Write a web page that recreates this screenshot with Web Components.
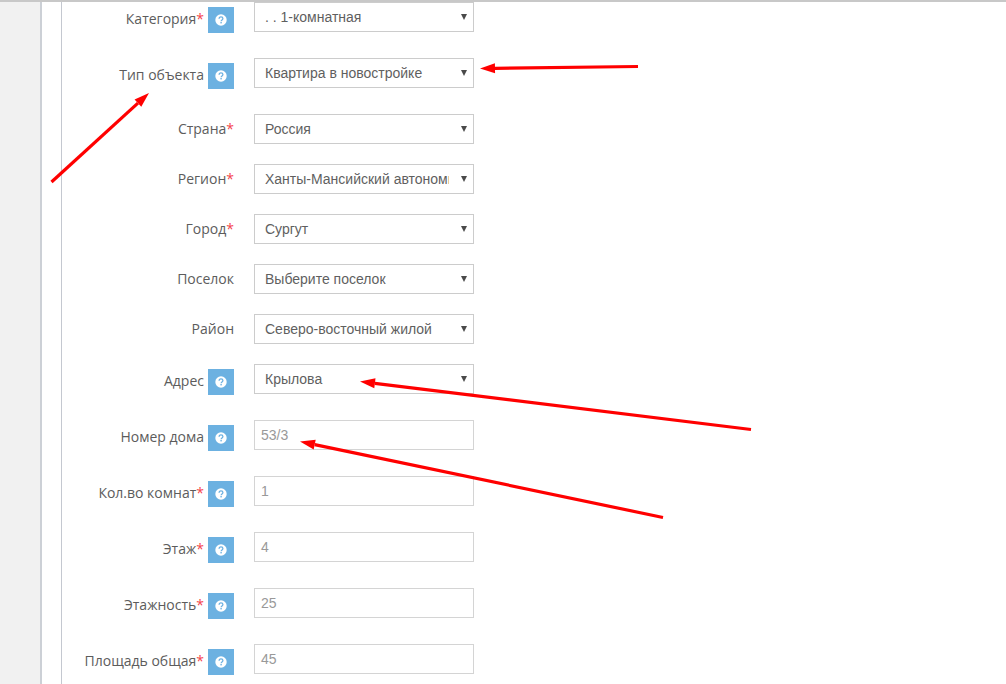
<!DOCTYPE html>
<html lang="ru">
<head>
<meta charset="utf-8">
<title>Форма объекта</title>
<style>
  html, body { margin: 0; padding: 0; background: #fff; overflow: hidden; }
</style>
</head>
<body>
<object-page>
  <form-row label="Категория" required help><select-box value=". . 1-комнатная"></select-box></form-row>
  <form-row label="Тип объекта" help><select-box value="Квартира в новостройке"></select-box></form-row>
  <form-row label="Страна" required><select-box value="Россия"></select-box></form-row>
  <form-row label="Регион" required><select-box value="Ханты-Мансийский автономный округ"></select-box></form-row>
  <form-row label="Город" required><select-box value="Сургут"></select-box></form-row>
  <form-row label="Поселок"><select-box value="Выберите поселок"></select-box></form-row>
  <form-row label="Район"><select-box value="Северо-восточный жилой"></select-box></form-row>
  <form-row label="Адрес" help><select-box value="Крылова"></select-box></form-row>
  <form-row label="Номер дома" help><text-box value="53/3"></text-box></form-row>
  <form-row label="Кол.во комнат" required help><text-box value="1"></text-box></form-row>
  <form-row label="Этаж" required help><text-box value="4"></text-box></form-row>
  <form-row label="Этажность" required help><text-box value="25"></text-box></form-row>
  <form-row label="Площадь общая" required help><text-box value="45"></text-box></form-row>
</object-page>
<red-arrows></red-arrows>

<script>
// page frame: grey side strip, two vertical rules, grey line on top
class ObjectPage extends HTMLElement {
  constructor() {
    super();
    this.attachShadow({ mode: 'open' });
    this.shadowRoot.innerHTML = `
      <style>
        :host {
          display: flex;
          height: 684px;
          overflow: hidden;
          box-sizing: border-box;
          border-top: 2px solid #c8c8c8;
        }
        .strip {
          width: 40px;
          flex: none;
          background: #f1f1f1;
          border-right: 2px solid #ccd0d6;
        }
        .gutter {
          width: 19px;
          flex: none;
          border-right: 1px solid #c4c8d0;
        }
        .form { flex: 1; min-width: 0; }
      </style>
      <div class="strip"></div>
      <div class="gutter"></div>
      <div class="form"><slot></slot></div>
    `;
  }
}

// one form line: label, optional star, optional help button, control in slot
class FormRow extends HTMLElement {
  constructor() {
    super();
    this.attachShadow({ mode: 'open' });
  }

  connectedCallback() {
    const hasHelp = this.hasAttribute('help');
    const required = this.hasAttribute('required');
    this.shadowRoot.innerHTML = `
      <style>
        :host {
          display: flex;
          align-items: flex-start;
          height: ${hasHelp ? 56 : 50}px;
          font-family: "Open Sans", sans-serif;
          font-size: 14px;
          color: #5c5c5c;
        }
        .side {
          width: 172px;
          flex: none;
          display: flex;
          justify-content: flex-end;
          align-items: flex-start;
          gap: 4px;
        }
        .label {
          line-height: 20px;
          padding-top: ${hasHelp ? 7 : 5}px;
          white-space: nowrap;
        }
        .star { color: #f4444c; }
        .help {
          width: 26px;
          height: 26px;
          margin-top: 5px;
          padding-right: 1px;
          box-sizing: border-box;
          background: #6cb1e1;
          display: flex;
          align-items: center;
          justify-content: center;
        }
        .help svg { display: block; }
        .control { margin-left: 20px; width: 220px; flex: none; }
      </style>
      <div class="side">
        <div class="label">${this.getAttribute('label')}${required ? '<span class="star">*</span>' : ''}</div>
        ${hasHelp ? `
          <div class="help">
            <svg width="12" height="12" viewBox="0 0 12 12">
              <circle cx="6" cy="6" r="5.7" fill="#fff"/>
              <path d="M4.1 4.8c0-1.2.8-1.9 1.9-1.9s1.9.6 1.9 1.6c0 1.4-1.8 1.4-1.8 2.7" fill="none" stroke="#6cb1e1" stroke-width="1.3"/>
              <rect x="5.4" y="8" width="1.4" height="1.4" fill="#6cb1e1"/>
            </svg>
          </div>
        ` : ''}
      </div>
      <div class="control"><slot></slot></div>
    `;
  }
}

class SelectBox extends HTMLElement {
  constructor() {
    super();
    this.attachShadow({ mode: 'open' });
  }

  connectedCallback() {
    this.shadowRoot.innerHTML = `
      <style>
        :host {
          display: block;
          height: 30px;
          box-sizing: border-box;
          border: 1px solid #ccc;
          font-family: "Liberation Sans", Arial, sans-serif;
          font-size: 14px;
          color: #5f5f5f;
          position: relative;
          background: #fff;
        }
        .value {
          position: absolute;
          left: 10px;
          right: 24px;
          top: 0;
          line-height: 29px;
          white-space: nowrap;
          overflow: hidden;
        }
        .caret {
          position: absolute;
          right: 6px;
          top: 11px;
          width: 0;
          height: 0;
          border-left: 3.5px solid transparent;
          border-right: 3.5px solid transparent;
          border-top: 6px solid #4a4a4a;
        }
      </style>
      <div class="value">${this.getAttribute('value')}</div>
      <div class="caret"></div>
    `;
  }
}

class TextBox extends HTMLElement {
  constructor() {
    super();
    this.attachShadow({ mode: 'open' });
  }

  connectedCallback() {
    this.shadowRoot.innerHTML = `
      <style>
        :host {
          display: block;
          height: 30px;
          box-sizing: border-box;
          border: 1px solid #d4d4d4;
          padding-left: 6px;
          font-family: "Liberation Sans", Arial, sans-serif;
          font-size: 14px;
          line-height: 28px;
          color: #999;
          background: #fff;
        }
      </style>
      ${this.getAttribute('value')}
    `;
  }
}

// red hand-drawn annotations lying over the form
class RedArrows extends HTMLElement {
  constructor() {
    super();
    this.attachShadow({ mode: 'open' });
    const arrows = [
      [638, 66.5, 480, 68.5],
      [51.5, 182, 149, 93],
      [751, 429.5, 360, 381.5],
      [663, 517.5, 300, 441.5]
    ];
    const heads = arrows.map(([x1, y1, x2, y2]) => {
      const a = Math.atan2(y2 - y1, x2 - x1);
      const bx = x2 - Math.cos(a) * 15, by = y2 - Math.sin(a) * 15;
      const nx = -Math.sin(a) * 5, ny = Math.cos(a) * 5;
      return `
        <line x1="${x1}" y1="${y1}" x2="${bx}" y2="${by}" stroke="#ff0000" stroke-width="3.2"/>
        <polygon points="${x2},${y2} ${bx + nx},${by + ny} ${bx - nx},${by - ny}" fill="#ff0000"/>
      `;
    }).join('');
    this.shadowRoot.innerHTML = `
      <style>
        :host { position: absolute; left: 0; top: 0; width: 1006px; height: 684px; pointer-events: none; }
        svg { display: block; }
      </style>
      <svg width="1006" height="684">${heads}</svg>
    `;
  }
}

customElements.define('object-page', ObjectPage);
customElements.define('form-row', FormRow);
customElements.define('select-box', SelectBox);
customElements.define('text-box', TextBox);
customElements.define('red-arrows', RedArrows);
</script>
</body>
</html>
